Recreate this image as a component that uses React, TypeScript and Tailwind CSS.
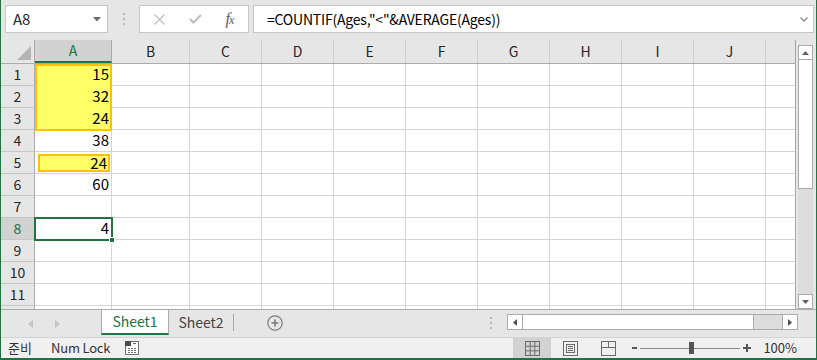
import React from 'react';

const FONT = "font-['Noto_Sans_CJK_KR','Noto_Sans',sans-serif]";

const COLS = [
  { label: 'A', w: 'w-[77px]' },
  { label: 'B', w: 'w-[78px]' },
  { label: 'C', w: 'w-[72px]' },
  { label: 'D', w: 'w-[72px]' },
  { label: 'E', w: 'w-[72px]' },
  { label: 'F', w: 'w-[72px]' },
  { label: 'G', w: 'w-[72px]' },
  { label: 'H', w: 'w-[72px]' },
  { label: 'I', w: 'w-[72px]' },
  { label: 'J', w: 'w-[72px]' },
];

const VALUES: Record<number, string> = { 1: '15', 2: '32', 3: '24', 4: '38', 5: '24', 6: '60', 8: '4' };

const Cell: React.FC<{ row: number; col: number; w: string }> = ({ row, col, w }) => {
  const value = col === 0 ? VALUES[row] : undefined;
  const yellow = col === 0 && row >= 1 && row <= 3;
  if (col === 0 && row === 5) {
    return (
      <div className={`${w} shrink-0 h-full border-r border-b border-[#d4d4d4] pl-[3px] pr-[1px] pt-[2px] pb-[1px]`}>
        <div className="h-full bg-[#ffff66] border-2 border-[#ffc000] flex items-center justify-end pr-[1px] text-[15px] text-black">
          {value}
        </div>
      </div>
    );
  }
  return (
    <div
      className={`${w} shrink-0 h-full border-r border-b flex items-center justify-end pr-[2px] text-[15px] text-black ${
        yellow ? 'bg-[#ffff66] border-[#ffff66]' : 'border-[#d4d4d4]'
      }`}
    >
      {value}
    </div>
  );
};

const IconGrid = () => (
  <svg width="15" height="15" viewBox="0 0 15 15" fill="none" stroke="#6b6b6b" strokeWidth="1">
    <rect x="0.5" y="0.5" width="14" height="14" />
    <line x1="5.2" y1="0" x2="5.2" y2="15" />
    <line x1="9.8" y1="0" x2="9.8" y2="15" />
    <line x1="0" y1="5.2" x2="15" y2="5.2" />
    <line x1="0" y1="9.8" x2="15" y2="9.8" />
  </svg>
);

const IconPage = () => (
  <svg width="15" height="15" viewBox="0 0 15 15" fill="none" stroke="#6b6b6b" strokeWidth="1">
    <rect x="0.5" y="0.5" width="14" height="14" />
    <rect x="3.5" y="3.5" width="8" height="8" />
    <line x1="5" y1="5.5" x2="10" y2="5.5" />
    <line x1="5" y1="7.5" x2="10" y2="7.5" />
    <line x1="5" y1="9.5" x2="10" y2="9.5" />
  </svg>
);

const IconBreak = () => (
  <svg width="15" height="15" viewBox="0 0 15 15" fill="none" stroke="#6b6b6b" strokeWidth="1">
    <rect x="0.5" y="0.5" width="14" height="14" />
    <line x1="7.5" y1="0" x2="7.5" y2="7" />
    <line x1="0" y1="6.5" x2="15" y2="6.5" />
  </svg>
);

const IconMacro = () => (
  <svg width="14" height="14" viewBox="0 0 14 14">
    <rect x="0.5" y="0.5" width="13" height="13" fill="#ffffff" stroke="#6b6b6b" />
    <rect x="0" y="0" width="6" height="5" fill="#4a4a4a" />
    <g fill="#6b6b6b">
      <rect x="3" y="7" width="2" height="1" />
      <rect x="6" y="7" width="2" height="1" />
      <rect x="9" y="7" width="2" height="1" />
      <rect x="3" y="9" width="2" height="1" />
      <rect x="6" y="9" width="2" height="1" />
      <rect x="9" y="9" width="2" height="1" />
      <rect x="3" y="11" width="2" height="1" />
      <rect x="6" y="11" width="2" height="1" />
      <rect x="9" y="11" width="2" height="1" />
      <rect x="8" y="2" width="3" height="1" />
    </g>
  </svg>
);

const Dots = () => (
  <div className="flex flex-col gap-[3px]">
    <div className="w-[2px] h-[2px] bg-[#b9b9b9]" />
    <div className="w-[2px] h-[2px] bg-[#b9b9b9]" />
    <div className="w-[2px] h-[2px] bg-[#b9b9b9]" />
  </div>
);

export default function App() {
  const rows = Array.from({ length: 12 }, (_, i) => i + 1);

  return (
    <div className={`w-[817px] h-[360px] bg-[#e6e6e6] border-l border-r border-b-2 border-[#217346] flex flex-col overflow-hidden ${FONT} text-[#262626]`}>
      {/* formula bar */}
      <div className="h-[40px] shrink-0 flex items-start pt-[5px] pl-[4px]">
        <div className="w-[103px] h-[28px] bg-white border border-[#c6c6c6] flex items-center pl-[7px] pr-[6px] text-[15px]">
          <span className="flex-1">A8</span>
          <svg width="8" height="5" viewBox="0 0 8 5"><path d="M0 0h8L4 4.5z" fill="#6b6b6b" /></svg>
        </div>
        <div className="w-[31px] h-[28px] flex items-center justify-center">
          <Dots />
        </div>
        <div className="w-[110px] h-[28px] bg-white border border-[#c6c6c6] flex items-center">
          <div className="w-[38px] flex justify-center">
            <svg width="11" height="11" viewBox="0 0 11 11" stroke="#bdbdbd" strokeWidth="1.2"><path d="M0.5 0.5l10 10M10.5 0.5l-10 10" /></svg>
          </div>
          <div className="w-[34px] flex justify-center">
            <svg width="13" height="10" viewBox="0 0 13 10" fill="none" stroke="#bdbdbd" strokeWidth="2"><path d="M1 5l3.5 3.5L12 1" /></svg>
          </div>
          <div className="w-[36px] flex justify-center">
            <span className="font-['Liberation_Serif',serif] italic text-[16px] leading-none text-[#5a5a5a]">
              f<span className="text-[12px] -ml-[1px]">x</span>
            </span>
          </div>
        </div>
        <div className="w-[4px]" />
        <div className="w-[561px] h-[28px] bg-white border border-[#c6c6c6] flex items-center pl-[13px] pr-[5px] text-[14px] tracking-[-0.2px] text-black">
          <span className="flex-1">=COUNTIF(Ages,"&lt;"&amp;AVERAGE(Ages))</span>
          <svg width="8" height="5" viewBox="0 0 8 5" fill="none" stroke="#8a8a8a" strokeWidth="1.3"><path d="M0.5 0.5L4 4l3.5-3.5" /></svg>
        </div>
      </div>

      {/* sheet area */}
      <div className="h-[269px] shrink-0 flex">
        <div className="w-[795px] shrink-0 flex flex-col overflow-hidden border-r border-[#a6a6a6]">
          {/* column headers */}
          <div className="h-[24px] shrink-0 flex border-b border-[#ababab]">
            <div className="w-[34px] shrink-0 h-full border-r border-[#ababab] flex items-end justify-end pr-[3px] pb-[3px]">
              <svg width="14" height="14" viewBox="0 0 14 14"><path d="M14 0V14H0z" fill="#b4b4b4" /></svg>
            </div>
            {COLS.map((c, i) => (
              <div
                key={c.label}
                className={`${c.w} shrink-0 h-full flex items-center justify-center text-[14px] border-r ${
                  i === 0 ? 'bg-[#d2d2d2] text-[#217346] border-[#ababab] border-b-2 border-b-[#217346] -mb-px' : 'border-[#d0d0d0]'
                }`}
              >
                {c.label}
              </div>
            ))}
            <div className="flex-1" />
          </div>

          {/* rows */}
          <div className="relative flex-1 flex flex-col bg-white">
            {rows.map((r) => (
              <div key={r} className="h-[22px] shrink-0 flex">
                <div
                  className={`w-[34px] shrink-0 h-full border-r border-b border-r-[#ababab] border-b-[#c6c6c6] flex items-center justify-center text-[14px] ${
                    r === 8 ? 'bg-[#d2d2d2] text-[#217346]' : 'bg-[#e6e6e6]'
                  }`}
                >
                  {r <= 11 ? r : ''}
                </div>
                {COLS.map((c, ci) => (
                  <Cell key={c.label} row={r} col={ci} w={c.w} />
                ))}
                <div className="flex-1 h-full border-b border-[#d4d4d4]" />
              </div>
            ))}

            {/* A1:A3 outline */}
            <div className="absolute left-[34px] top-0 w-[77px] h-[67px] border-2 border-[#ffc000]" />

            {/* A8 selection */}
            <div className="absolute left-[33px] top-[153px] w-[79px] h-[24px] border-2 border-[#217346]">
              <div className="absolute -right-[4px] -bottom-[4px] w-[6px] h-[6px] bg-[#217346] border border-white" />
            </div>
          </div>
        </div>

        {/* vertical scrollbar */}
        <div className="w-[20px] shrink-0 flex flex-col pl-[2px] pr-[3px] pt-[5px]">
          <div className="h-[15px] bg-white border border-[#ababab] flex items-center justify-center">
            <svg width="7" height="4" viewBox="0 0 7 4"><path d="M3.5 0L7 4H0z" fill="#606060" /></svg>
          </div>
          <div className="h-[129px] bg-white border border-[#ababab] border-t-0" />
          <div className="flex-1 bg-[#dcdcdc]" />
          <div className="h-[15px] bg-white border border-[#ababab] flex items-center justify-center">
            <svg width="7" height="4" viewBox="0 0 7 4"><path d="M0 0H7L3.5 4z" fill="#606060" /></svg>
          </div>
        </div>
      </div>

      {/* sheet tabs */}
      <div className="h-[28px] shrink-0 flex items-stretch border-t border-[#ababab] bg-[#e6e6e6]">
        <div className="w-[100px] flex items-center pl-[27px] gap-[22px]">
          <svg width="5" height="8" viewBox="0 0 5 8"><path d="M5 0V8L0 4z" fill="#c4c4c4" /></svg>
          <svg width="5" height="8" viewBox="0 0 5 8"><path d="M0 0V8L5 4z" fill="#c4c4c4" /></svg>
        </div>
        <div className="w-[68px] mb-[2px] bg-white border-l border-r border-[#ababab] border-b-2 border-b-[#217346] flex items-center justify-center text-[14px] text-[#217346]">
          Sheet1
        </div>
        <div className="w-[64px] flex items-center justify-center text-[14px] text-[#444444] pb-[2px]">
          Sheet2
        </div>
        <div className="flex items-center pb-[2px]">
          <div className="w-px h-[17px] bg-[#a6a6a6]" />
        </div>
        <div className="w-[82px] flex items-center justify-center pb-[2px]">
          <svg width="16" height="16" viewBox="0 0 16 16" fill="none" stroke="#7a7a7a" strokeWidth="1.2">
            <circle cx="8" cy="8" r="7.2" />
            <path d="M8 4.5v7M4.5 8h7" strokeWidth="1.6" />
          </svg>
        </div>
        <div className="flex-1 flex items-center justify-end pr-[15px] pb-[2px]">
          <Dots />
        </div>
        <div className="w-[309px] shrink-0 flex items-center pr-[18px] pb-[3px]">
          <div className="w-full h-[16px] flex border border-[#ababab] bg-[#dcdcdc]">
            <div className="w-[15px] bg-white border-r border-[#ababab] flex items-center justify-center">
              <svg width="4" height="7" viewBox="0 0 4 7"><path d="M4 0V7L0 3.5z" fill="#505050" /></svg>
            </div>
            <div className="w-[231px] bg-white border-r border-[#ababab]" />
            <div className="flex-1" />
            <div className="w-[15px] bg-white border-l border-[#ababab] flex items-center justify-center">
              <svg width="4" height="7" viewBox="0 0 4 7"><path d="M0 0V7L4 3.5z" fill="#505050" /></svg>
            </div>
          </div>
        </div>
      </div>

      {/* status bar */}
      <div className="flex-1 flex items-stretch border-t border-[#d4d4d4] bg-[#f0f0f0] text-[13px] text-[#333333]">
        <div className="flex items-center pl-[7px] w-[50px]">준비</div>
        <div className="flex items-center w-[74px] tracking-[-0.2px]">Num Lock</div>
        <div className="flex items-center">
          <IconMacro />
        </div>
        <div className="flex-1" />
        <div className="w-[38px] bg-[#d2d2d2] flex items-center justify-center">
          <IconGrid />
        </div>
        <div className="w-[38px] flex items-center justify-center">
          <IconPage />
        </div>
        <div className="w-[38px] flex items-center justify-center">
          <IconBreak />
        </div>
        <div className="flex items-center gap-[3px] pl-[5px]">
          <div className="w-[5px] h-[2px] bg-[#555555]" />
          <div className="relative w-[100px] h-px bg-[#8a8a8a]">
            <div className="absolute left-[49px] -top-[6px] w-[5px] h-[12px] bg-[#555555]" />
          </div>
          <svg width="8" height="8" viewBox="0 0 8 8" stroke="#555555" strokeWidth="2"><path d="M4 0v8M0 4h8" /></svg>
        </div>
        <div className="flex items-center pl-[12px] pr-[19px]">100%</div>
      </div>
    </div>
  );
}
